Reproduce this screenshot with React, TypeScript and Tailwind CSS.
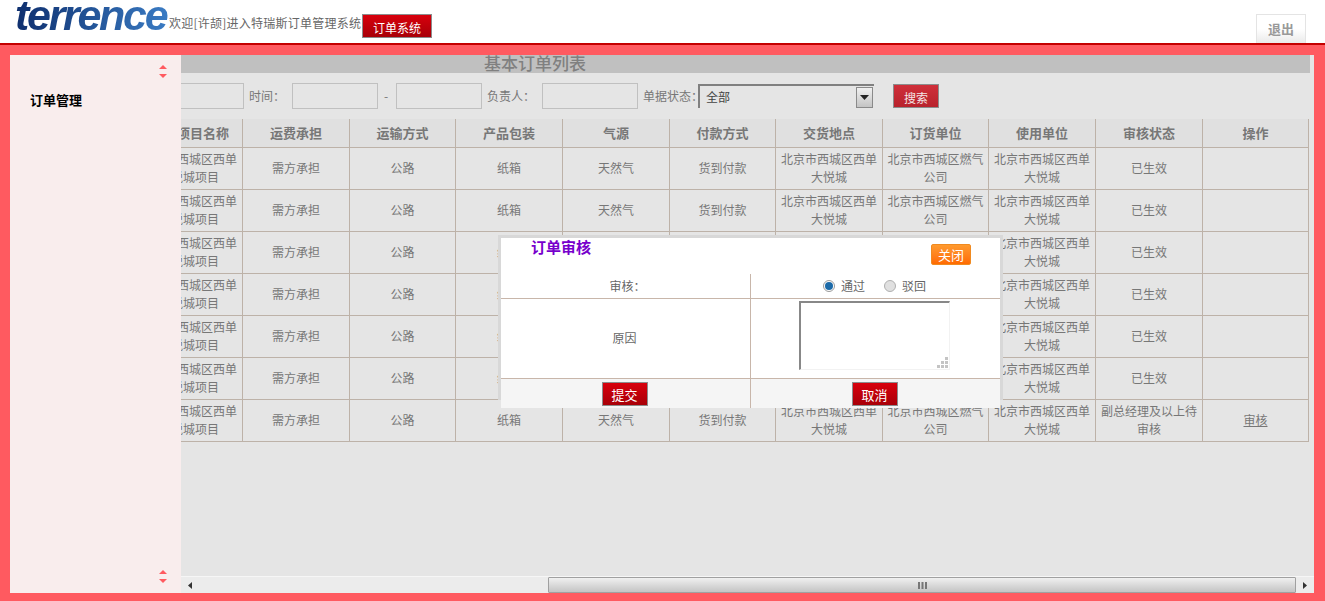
import React from 'react';

const CJK = { fontFamily: '"Noto Sans CJK SC", "Liberation Sans", sans-serif' };

const headers = ['项目名称', '运费承担', '运输方式', '产品包装', '气源', '付款方式', '交货地点', '订货单位', '使用单位', '审核状态', '操作'];
const widths = [107, 107, 106, 107, 107, 106, 107, 106, 107, 107, 106];

const RedButton = ({ label, className }: { label: string; className: string }) => (
  <button className={`flex items-center justify-center border border-[#8c8c8c] bg-gradient-to-b from-[#d8000c] to-[#a80008] pt-[3px] text-white ${className}`}>
    {label}
  </button>
);

const SortArrows = ({ className }: { className: string }) => (
  <svg width="10" height="14" viewBox="0 0 10 14" className={className}>
    <path d="M5 0 L9 4 L1 4 Z M1 9 L9 9 L5 13 Z" fill="#ff5a60" />
  </svg>
);

const Field = ({ className }: { className: string }) => (
  <input className={`h-[26px] shrink-0 border border-[#c0c0c0] bg-[#e5e5e5] ${className}`} />
);

const rows = Array.from({ length: 7 }, (_, i) => i);

export default function App() {
  return (
    <div className="flex h-[601px] w-[1325px] flex-col overflow-hidden bg-white" style={CJK}>
      {/* 顶部 */}
      <div className="flex h-[45px] shrink-0 border-b-2 border-[#c40000] bg-white">
        <div
          className="ml-[15px] h-[36px] w-[154px] whitespace-nowrap bg-gradient-to-r from-[#0f2f6e] to-[#3b7cc4] bg-clip-text text-[43px] font-bold italic leading-[30px] tracking-[-2.3px] text-transparent"
          style={{ fontFamily: '"Liberation Sans", sans-serif' }}
        >
          terrence
        </div>
        <span className="mt-[14px] w-[193px] whitespace-nowrap text-[12px] leading-[18px] tracking-[0.25px] text-[#666]">欢迎[许颉]进入特瑞斯订单管理系统</span>
        <RedButton label="订单系统" className="mt-[14px] h-6 w-[70px] text-[12px]" />
        <button className="ml-auto mr-[19px] mt-[14px] h-[29px] w-[50px] border border-b-0 border-[#e4e4e4] bg-gradient-to-b from-white via-white to-[#eaeaea] text-[13px] font-bold text-[#999]">
          退出
        </button>
      </div>

      <div className="flex min-h-0 flex-1 bg-[#ff5a60] pb-2 pl-[10px] pr-[11px] pt-[10px]">
        {/* 左侧菜单 */}
        <aside className="relative w-[171px] shrink-0 bg-[#f9eded] pl-5 pt-[36px]">
          <div className="text-[13px] font-bold leading-[17px] text-black">订单管理</div>
          <SortArrows className="absolute right-[13px] top-[10px]" />
          <SortArrows className="absolute bottom-[9px] right-[13px]" />
        </aside>

        {/* 主内容 */}
        <main className="relative flex min-w-0 flex-1 flex-col overflow-hidden bg-[#e5e5e5]">
          <div className="mr-1 h-[18px] shrink-0 bg-[#c0c0c0] pl-[303px] text-[17px] font-medium leading-[16px] text-[#808080]">
            基本订单列表
          </div>

          <div className="ml-[-40px] mt-[10px] flex h-[26px] shrink-0 items-center whitespace-nowrap text-[12px] text-[#777]">
            <Field className="w-[103px]" />
            <span className="ml-[5px] w-[43px]">时间：</span>
            <Field className="w-[86px]" />
            <span className="ml-[6px] w-3">-</span>
            <Field className="w-[86px]" />
            <span className="ml-[5px] w-[55px]">负责人：</span>
            <Field className="w-[96px]" />
            <span className="ml-[5px] w-[55px]">单据状态：</span>
            <div className="flex h-6 w-[176px] items-center border-l-2 border-t-2 border-[#808080] pl-[6px] text-[#444]">
              全部
              <span className="ml-auto mr-px flex h-[21px] w-[17px] items-center justify-center border border-[#8a8a8a] bg-gradient-to-b from-[#f0f0f0] to-[#c4c4c4]">
                <svg width="9" height="5" viewBox="0 0 9 5"><path d="M0 0 H9 L4.5 5 Z" fill="#222" /></svg>
              </span>
            </div>
            <button className="ml-[19px] h-6 w-[46px] border border-[#8c8c8c] bg-gradient-to-b from-[#cf2f3a] to-[#b8222c] pt-[3px] text-[12px] text-[#f3e4e6]">
              搜索
            </button>
          </div>

          <div className="ml-[-46px] mt-[10px] min-h-0 flex-1">
            <table className="w-[1173px] table-fixed border-collapse text-center text-[12px] text-[#777]">
              <colgroup>
                {widths.map((w, i) => (
                  <col key={i} style={{ width: w }} />
                ))}
              </colgroup>
              <thead>
                <tr className="h-[28px] bg-[#e0e0e0]">
                  {headers.map((h, i) => (
                    <th key={h} className={`border border-t-0 border-[#bdb2a8] text-[13px] font-bold text-[#777] ${i === 0 ? 'pl-7' : ''}`}>
                      {h}
                    </th>
                  ))}
                </tr>
              </thead>
              <tbody>
                {rows.map(i => (
                  <tr key={i} className="h-[42px] leading-[18px]">
                    <td className="border border-[#bdb2a8] px-1">北京市西城区西单大悦城项目</td>
                    <td className="border border-[#bdb2a8]">需方承担</td>
                    <td className="border border-[#bdb2a8]">公路</td>
                    <td className="border border-[#bdb2a8]">纸箱</td>
                    <td className="border border-[#bdb2a8]">天然气</td>
                    <td className="border border-[#bdb2a8]">货到付款</td>
                    <td className="border border-[#bdb2a8] px-1">北京市西城区西单大悦城</td>
                    <td className="border border-[#bdb2a8] px-1">北京市西城区燃气公司</td>
                    <td className="border border-[#bdb2a8] px-1">北京市西城区西单大悦城</td>
                    <td className="border border-[#bdb2a8] px-1">{i === 6 ? '副总经理及以上待审核' : '已生效'}</td>
                    <td className="border border-[#bdb2a8]">{i === 6 && <span className="underline">审核</span>}</td>
                  </tr>
                ))}
              </tbody>
            </table>
          </div>

          {/* 横向滚动条 */}
          <div className="flex h-[17px] shrink-0 items-center border-t border-[#f6f6f6] bg-[#ececec]">
            <span className="flex h-full w-[17px] items-center justify-center">
              <svg width="4" height="7" viewBox="0 0 4 7"><path d="M4 0 V7 L0 3.5 Z" fill="#333" /></svg>
            </span>
            <div className="ml-[350px] flex h-[16px] w-[748px] items-center justify-center rounded-[1px] border border-[#a0a0a0] bg-gradient-to-b from-[#f0f0f0] to-[#c4c4c4]">
              <svg width="9" height="7" viewBox="0 0 9 7"><path d="M0 0h2v7H0z M3.5 0h2v7h-2z M7 0h2v7H7z" fill="#777" /></svg>
            </div>
            <span className="ml-auto flex h-full w-[18px] items-center justify-center">
              <svg width="4" height="7" viewBox="0 0 4 7"><path d="M0 0 V7 L4 3.5 Z" fill="#333" /></svg>
            </span>
          </div>

          {/* 审核弹窗 */}
          <div className="absolute left-[317px] top-[180px] h-[165px] w-[505px] border-[3px] border-[#d8d8d8] bg-white">
            <div className="flex h-[36px] bg-white">
              <span className="ml-[30px] text-[15px] font-bold leading-[17px] text-[#7700cc]">订单审核</span>
              <button className="ml-auto mr-[29px] mt-[6px] h-[21px] w-10 rounded-[2px] border border-[#f08a20] bg-gradient-to-b from-[#ff9a2e] to-[#ff6a00] text-[13px] leading-none text-white">
                关闭
              </button>
            </div>
            <div className="grid h-[134px] w-[499px] grid-cols-[250px_249px] grid-rows-[25px_80px_29px] bg-white text-[12px] text-[#666]">
              <div className="flex items-center justify-center border-b border-r border-[#c8b6aa] pl-1">审核：</div>
              <div className="flex items-center justify-center border-b border-[#c8b6aa] pr-[2px]">
                <span className="flex h-3 w-3 items-center justify-center rounded-full border border-[#9a9a9a] bg-white">
                  <span className="h-2 w-2 rounded-full bg-[#1c6aa8]" />
                </span>
                <span className="ml-[6px]">通过</span>
                <span className="ml-[19px] h-3 w-3 rounded-full border border-[#b0b0b0] bg-[#e0e0e0]" />
                <span className="ml-[6px]">驳回</span>
              </div>
              <div className="flex items-center justify-center border-b border-r border-[#c8b6aa] pb-[2px] pr-[2px]">原因</div>
              <div className="border-b border-[#c8b6aa] pl-[48px] pt-[2px]">
                <div className="relative h-[69px] w-[151px] border-b border-l-2 border-r border-t-2 border-b-[#f2f2f2] border-l-[#888] border-r-[#f2f2f2] border-t-[#888]">
                  <svg width="12" height="12" viewBox="0 0 12 12" className="absolute bottom-0 right-0">
                    <path d="M8 0h3v3H8z M4 4h3v3H4z M8 4h3v3H8z M0 8h3v3H0z M4 8h3v3H4z M8 8h3v3H8z" fill="#c4c4c4" />
                  </svg>
                </div>
              </div>
              <div className="flex items-center justify-center border-r border-[#c8b6aa] bg-[#f5f5f5] pr-[2px]">
                <RedButton label="提交" className="h-6 w-[46px] text-[13px]" />
              </div>
              <div className="flex items-center justify-center bg-[#f5f5f5] pr-[2px]">
                <RedButton label="取消" className="h-6 w-[46px] text-[13px]" />
              </div>
            </div>
          </div>
        </main>
      </div>
    </div>
  );
}
